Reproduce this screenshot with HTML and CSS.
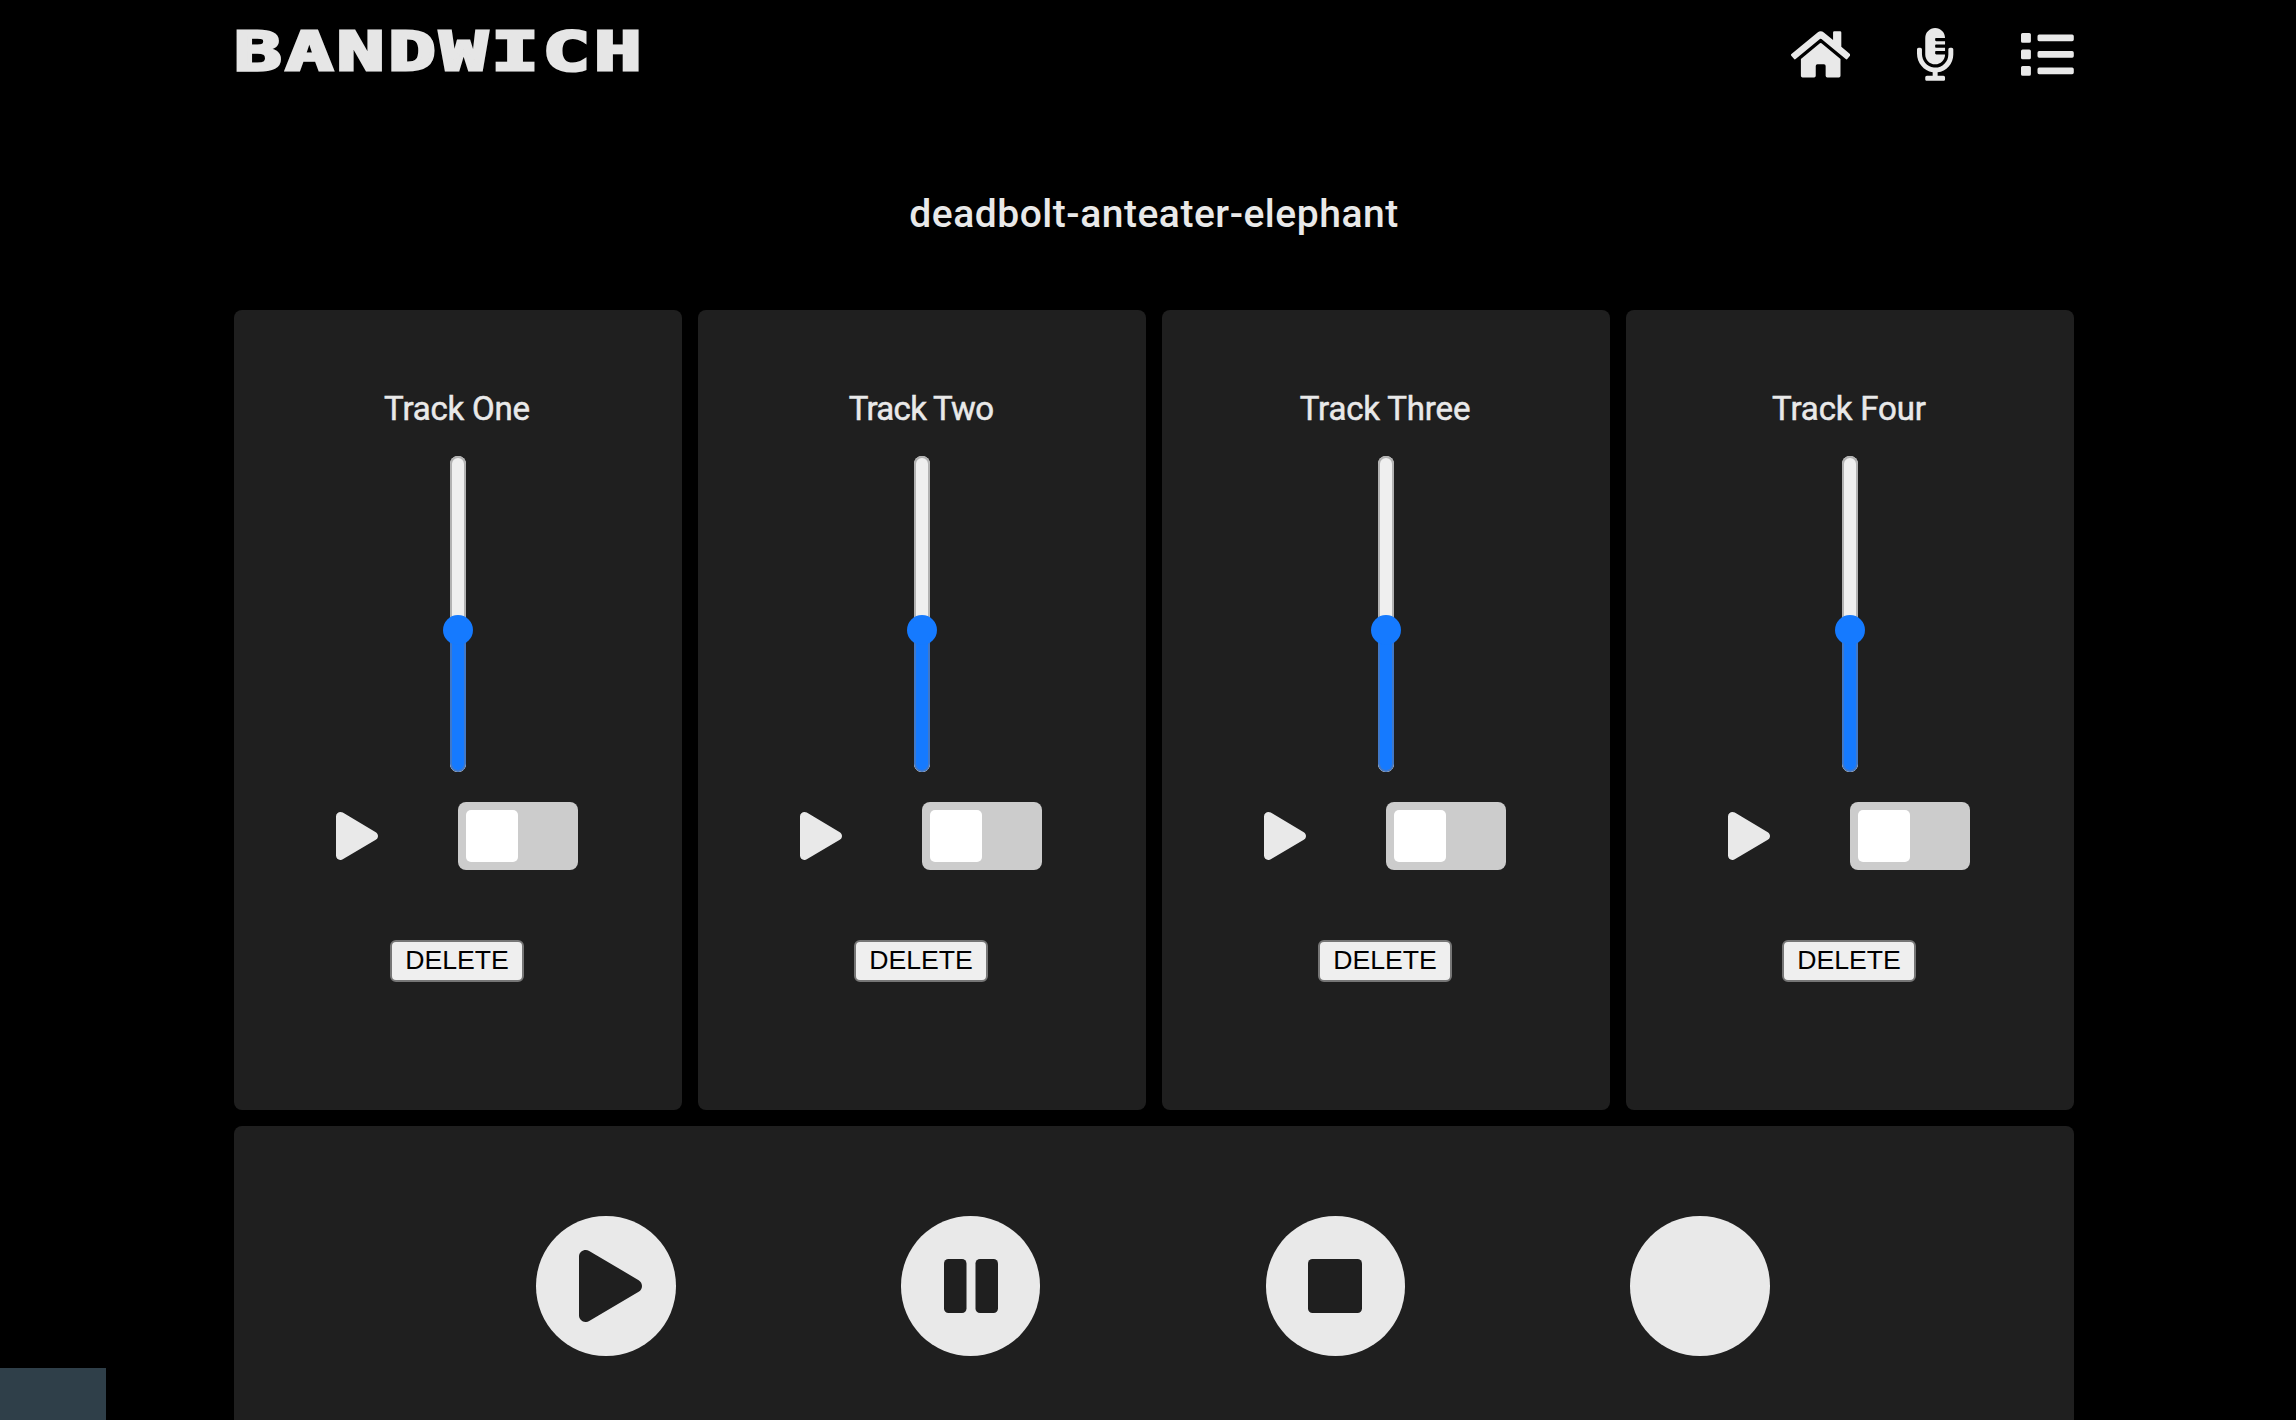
FILE: index.html
```html
<!DOCTYPE html>
<html lang="en">
<head>
<meta charset="utf-8">
<title>Bandwich</title>
<link rel="stylesheet" href="styles.css">
</head>
<body>
<svg class="sprite" aria-hidden="true">
  <symbol id="play" viewBox="0 0 448 512"><path d="M424.4 214.7L72.4 6.6C43.8-10.3 0 6.1 0 47.9V464c0 37.5 40.7 60.1 72.4 41.3l352-208c31.4-18.5 31.5-64.1 0-82.6z"/></symbol>
</svg>
<header class="header">
  <h1 class="logo">BANDWICH</h1>
  <nav class="nav">
    <a class="nav-link"><svg class="icon-home" viewBox="0 0 576 512"><path d="M280.37 148.26L96 300.11V464a16 16 0 0 0 16 16l112.06-.29a16 16 0 0 0 15.92-16V368a16 16 0 0 1 16-16h64a16 16 0 0 1 16 16v95.64a16 16 0 0 0 16 16.05L464 480a16 16 0 0 0 16-16V300L295.67 148.26a12.19 12.19 0 0 0-15.3 0zM571.6 251.47L488 182.56V44.05a12 12 0 0 0-12-12h-56a12 12 0 0 0-12 12v72.61L318.47 43a48 48 0 0 0-61 0L4.34 251.47a12 12 0 0 0-1.6 16.9l25.5 31A12 12 0 0 0 45.15 301l235.22-193.74a12.19 12.19 0 0 1 15.3 0L530.9 301a12 12 0 0 0 16.9-1.6l25.5-31a12 12 0 0 0-1.7-16.93z"/></svg></a>
    <a class="nav-link"><svg class="icon-mic" viewBox="0 0 352 512"><path d="M336 192h-16c-8.84 0-16 7.16-16 16v48c0 74.8-64.49 134.82-140.79 127.38C96.71 376.89 48 317.11 48 250.3V208c0-8.84-7.16-16-16-16H16c-8.84 0-16 7.16-16 16v40.16c0 89.64 63.97 169.55 152 181.69V464H96c-8.84 0-16 7.16-16 16v16c0 8.84 7.16 16 16 16h160c8.84 0 16-7.16 16-16v-16c0-8.84-7.16-16-16-16h-56v-33.77C285.71 418.47 352 344.9 352 256v-48c0-8.84-7.16-16-16-16zM176 352c53.02 0 96-42.98 96-96h-85.33c-5.89 0-10.67-3.58-10.67-8v-16c0-4.42 4.78-8 10.67-8H272v-32h-85.33c-5.89 0-10.67-3.58-10.67-8v-16c0-4.42 4.78-8 10.67-8H272v-32h-85.33c-5.89 0-10.67-3.58-10.67-8v-16c0-4.42 4.78-8 10.67-8H272c0-53.02-42.98-96-96-96S80 42.98 80 96v160c0 53.02 42.98 96 96 96z"/></svg></a>
    <a class="nav-link"><svg class="icon-list" viewBox="0 0 512 512"><path d="M80 368H16a16 16 0 0 0-16 16v64a16 16 0 0 0 16 16h64a16 16 0 0 0 16-16v-64a16 16 0 0 0-16-16zm0-320H16A16 16 0 0 0 0 64v64a16 16 0 0 0 16 16h64a16 16 0 0 0 16-16V64a16 16 0 0 0-16-16zm0 160H16a16 16 0 0 0-16 16v64a16 16 0 0 0 16 16h64a16 16 0 0 0 16-16v-64a16 16 0 0 0-16-16zm416 176H176a16 16 0 0 0-16 16v32a16 16 0 0 0 16 16h320a16 16 0 0 0 16-16v-32a16 16 0 0 0-16-16zm0-320H176a16 16 0 0 0-16 16v32a16 16 0 0 0 16 16h320a16 16 0 0 0 16-16V80a16 16 0 0 0-16-16zm0 160H176a16 16 0 0 0-16 16v32a16 16 0 0 0 16 16h320a16 16 0 0 0 16-16v-32a16 16 0 0 0-16-16z"/></svg></a>
  </nav>
</header>
<main class="main">
  <h2 class="title"><span class="title-text">deadbolt-anteater-elephant</span></h2>
  <section class="tracks">
    <article class="track">
      <h3 class="track-name name-one">Track One</h3>
      <div class="slider"><div class="rail"><div class="fill"></div></div><div class="thumb"></div></div>
      <div class="controls"><svg class="track-play"><use href="#play"/></svg><div class="toggle"><div class="knob"></div></div></div>
      <button class="delete">DELETE</button>
    </article>
    <article class="track">
      <h3 class="track-name name-two">Track Two</h3>
      <div class="slider"><div class="rail"><div class="fill"></div></div><div class="thumb"></div></div>
      <div class="controls"><svg class="track-play"><use href="#play"/></svg><div class="toggle"><div class="knob"></div></div></div>
      <button class="delete">DELETE</button>
    </article>
    <article class="track">
      <h3 class="track-name name-three">Track Three</h3>
      <div class="slider"><div class="rail"><div class="fill"></div></div><div class="thumb"></div></div>
      <div class="controls"><svg class="track-play"><use href="#play"/></svg><div class="toggle"><div class="knob"></div></div></div>
      <button class="delete">DELETE</button>
    </article>
    <article class="track">
      <h3 class="track-name name-four">Track Four</h3>
      <div class="slider"><div class="rail"><div class="fill"></div></div><div class="thumb"></div></div>
      <div class="controls"><svg class="track-play"><use href="#play"/></svg><div class="toggle"><div class="knob"></div></div></div>
      <button class="delete">DELETE</button>
    </article>
  </section>
  <section class="transport">
    <div class="round"><svg class="round-play"><use href="#play"/></svg></div>
    <div class="round"><svg class="round-icon" viewBox="0 0 54 54"><rect width="22.5" height="54" rx="4.5"/><rect x="31.5" width="22.5" height="54" rx="4.5"/></svg></div>
    <div class="round"><svg class="round-icon" viewBox="0 0 54 54"><rect width="54" height="54" rx="4.5"/></svg></div>
    <div class="round"></div>
  </section>
</main>
<div class="status"></div>
</body>
</html>
```
FILE: styles.css
```css
* { box-sizing: border-box; }
body {
  margin: 0;
  height: 1420px;
  overflow: hidden;
  background: #000;
  color: #e9e9e9;
  font-family: Roboto, "Liberation Sans", sans-serif;
}
h1, h2, h3 { margin: 0; }
svg { display: block; fill: currentColor; }
.sprite { display: none; }
.header {
  display: flex;
  justify-content: space-between;
  width: 1840px;
  height: 109px;
  margin-left: 234px;
}
.logo {
  font: bold 54px/104px "DejaVu Sans Mono", monospace;
  letter-spacing: 2.6px;
  color: #e6e6e6;
  -webkit-text-stroke: 3px #e6e6e6;
  transform: scaleX(1.465);
  transform-origin: 0 50%;
}
.nav { display: flex; align-items: center; gap: 67px; padding-right: 0.5px; }
.icon-home { width: 59.4px; height: 52.8px; }
.icon-mic { width: 36.3px; height: 52.8px; }
.icon-list { width: 52.8px; height: 52.8px; }
.main { width: 1840px; margin-left: 234px; }
.title {
  height: 201px;
  padding-top: 81px;
  text-align: center;
  font-size: 39px;
  line-height: 48px;
  font-weight: 500;
}
.title-text { letter-spacing: 0.53px; }
.tracks {
  display: grid;
  grid-template-columns: repeat(4, 1fr);
  gap: 16px;
  height: 800px;
}
.track {
  display: flex;
  flex-direction: column;
  align-items: center;
  padding-top: 79px;
  border-radius: 8px;
  background: #1f1f1f;
}
.track-name {
  padding-right: 2px;
  font-size: 33px;
  line-height: 40px;
  font-weight: 400;
  -webkit-text-stroke: 0.5px currentColor;
}
.name-one { letter-spacing: -0.2px; }
.name-two { letter-spacing: -0.7px; }
.name-three { letter-spacing: -0.15px; }
.name-four { letter-spacing: -0.15px; }
.slider {
  position: relative;
  width: 30px;
  height: 316px;
  margin-top: 27px;
  padding: 0 7px;
}
.rail {
  display: flex;
  align-items: flex-end;
  height: 316px;
  overflow: hidden;
  border-radius: 8px;
  background: #efefef;
  box-shadow: inset 0 0 0 2px #b2b2b2;
}
.fill {
  width: 16px;
  height: 142px;
  border: 2px solid #4078c8;
  border-top: 0;
  border-radius: 0 0 8px 8px;
  background: #157aff;
}
.thumb {
  position: absolute;
  top: 159px;
  left: 0;
  width: 30px;
  height: 30px;
  border-radius: 50%;
  background: #157aff;
}
.controls {
  display: flex;
  align-items: center;
  gap: 80px;
  width: 244px;
  height: 68px;
  margin-top: 30px;
}
.track-play { width: 42px; height: 48px; }
.toggle {
  width: 120px;
  height: 68px;
  padding: 8px;
  border-radius: 8px;
  background: #ccc;
}
.knob { width: 52px; height: 52px; border-radius: 5px; background: #fff; }
.delete {
  width: 134px;
  height: 42px;
  margin: 70px 2px 0 0;
  padding: 0 0 1px;
  border: 2px solid #767676;
  border-radius: 6px;
  background: #efefef;
  color: #000;
  font: 26.67px "Liberation Sans", Arial, sans-serif;
}
.transport {
  display: flex;
  gap: 225.3px;
  height: 320px;
  margin-top: 16px;
  padding: 90px 0 0 302px;
  border-radius: 8px;
  background: #1f1f1f;
}
.round {
  display: flex;
  align-items: center;
  justify-content: center;
  width: 139.5px;
  height: 139.5px;
  border-radius: 50%;
  background: #e9e9e9;
  color: #1f1f1f;
}
.round-play { width: 63px; height: 72px; margin-left: 9px; }
.round-icon { width: 54px; height: 54px; }
.status {
  position: fixed;
  left: 0;
  bottom: 0;
  width: 106px;
  height: 52px;
  background: #2f3f49;
}
```
